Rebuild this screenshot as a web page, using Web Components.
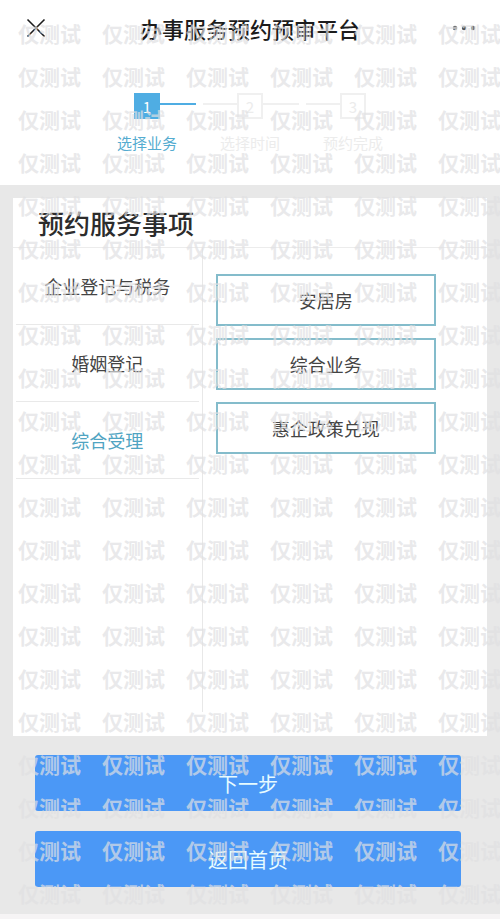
<!DOCTYPE html>
<html lang="zh-CN">
<head>
<meta charset="UTF-8">
<meta name="viewport" content="width=device-width, initial-scale=1">
<title>办事服务预约预审平台</title>
<style>
    body {
        margin: 0;
        font-family: "Noto Sans CJK SC", sans-serif;
        background: #e8e8e8;
    }
</style>
</head>
<body>
<booking-page></booking-page>

<template id="page-template">
    <style>
        :host {
            position: relative;
            display: flex;
            flex-direction: column;
            min-height: 100vh;
            overflow: hidden;
        }

        step-bar {
            padding: 37px 0 30px;
            background: #fff;
        }

        service-card {
            flex: 1;
            margin: 13px 13px 19px;
        }

        .actions {
            display: flex;
            flex-direction: column;
            gap: 20px;
            padding: 0 39px 27px 35px;
        }

        .bottom {
            height: 5px;
            background: #f6f4f5;
        }
    </style>

    <title-bar>办事服务预约预审平台</title-bar>
    <step-bar>
        <step-item number="1" active>选择业务</step-item>
        <step-item number="2">选择时间</step-item>
        <step-item number="3">预约完成</step-item>
    </step-bar>
    <service-card>
        <span slot="heading">预约服务事项</span>
        <category-item slot="category">企业登记与税务</category-item>
        <category-item slot="category">婚姻登记</category-item>
        <category-item slot="category" active>综合受理</category-item>
        <service-option>安居房</service-option>
        <service-option>综合业务</service-option>
        <service-option>惠企政策兑现</service-option>
    </service-card>
    <div class="actions">
        <action-button>下一步</action-button>
        <action-button>返回首页</action-button>
    </div>
    <div class="bottom"></div>
    <water-mark text="仅测试" rows="21" columns="6"></water-mark>
</template>

<template id="title-template">
    <style>
        :host {
            display: grid;
            grid-template-columns: 72px 1fr 72px;
            align-items: center;
            height: 56px;
            background: #fff;
            color: #1c1c1c;
        }

        h1 {
            margin: 0;
            font-size: 22px;
            font-weight: 500;
            line-height: 28px;
            text-align: center;
            white-space: nowrap;
        }

        button {
            display: flex;
            align-items: center;
            justify-content: center;
            height: 56px;
            padding: 0;
            border: 0;
            background: none;
            color: inherit;
        }
    </style>
    <button type="button" aria-label="关闭">
        <svg width="20" height="20" viewBox="0 0 20 20" fill="none" stroke="currentColor" stroke-width="1.6">
            <path d="M1.500 1.500l17 17M18.500 1.500l-17 17"/>
        </svg>
    </button>
    <h1><slot></slot></h1>
    <button type="button" aria-label="更多">
        <svg width="24" height="6" viewBox="0 0 24 6" fill="#555">
            <circle cx="3" cy="3" r="2.200"/>
            <circle cx="12" cy="3" r="2.200"/>
            <circle cx="21" cy="3" r="2.200"/>
        </svg>
    </button>
</template>

<template id="steps-template">
    <style>
        :host {
            display: flex;
            justify-content: center;
        }
    </style>
    <slot></slot>
</template>

<template id="step-template">
    <style>
        :host {
            --tone: #f0f0f0;
            display: block;
            width: 103px;
            color: #ececec;
            font-size: 15px;
            line-height: 24px;
            text-align: center;
        }

        :host([active]) {
            --tone: #4fade3;
            color: #55acd0;
        }

        .marker {
            display: grid;
            grid-template-columns: 1fr 26px 1fr;
            margin-bottom: 12px;
        }

        .marker::before,
        .marker::after {
            content: "";
            height: 2px;
            margin-top: 10px;
            background: var(--tone);
        }

        .marker::before {
            margin-left: 4px;
        }

        .marker::after {
            margin-right: 3px;
        }

        :host(:first-of-type) .marker::before,
        :host(:last-of-type) .marker::after {
            visibility: hidden;
        }

        .number {
            box-sizing: border-box;
            height: 26px;
            border: 2px solid var(--tone);
            line-height: 24px;
        }

        :host([active]) .number {
            background: var(--tone);
            color: #fff;
        }
    </style>
    <div class="marker"><span class="number"></span></div>
    <slot></slot>
</template>

<template id="card-template">
    <style>
        :host {
            display: flex;
            flex-direction: column;
            padding-bottom: 24px;
            box-sizing: border-box;
            background: #fff;
        }

        h2 {
            margin: 0;
            padding: 6px 25px;
            border-bottom: 1px solid #ececec;
            color: #2c2c2c;
            font-size: 26px;
            font-weight: 500;
            line-height: 37px;
        }

        .columns {
            flex: 1;
            display: grid;
            grid-template-columns: 2fr 3fr;
        }

        nav {
            padding: 0 3px;
            border-right: 1px solid #e8e8e8;
        }

        .options {
            display: flex;
            flex-direction: column;
            gap: 12px;
            padding: 26px 51px 0 13px;
        }
    </style>
    <h2><slot name="heading"></slot></h2>
    <div class="columns">
        <nav><slot name="category"></slot></nav>
        <div class="options"><slot></slot></div>
    </div>
</template>

<template id="category-template">
    <style>
        :host {
            display: block;
            border-bottom: 1px solid #e9e9e9;
        }

        a {
            display: block;
            color: #444;
            font-size: 18px;
            line-height: 76px;
            text-align: center;
            text-decoration: none;
            white-space: nowrap;
        }

        :host([active]) a {
            color: #50a4c2;
        }
    </style>
    <a href="#"><slot></slot></a>
</template>

<template id="option-template">
    <style>
        :host {
            display: block;
        }

        button {
            width: 100%;
            height: 52px;
            padding: 0;
            border: 2px solid #84bccb;
            background: #fff;
            color: #444;
            font: inherit;
            font-size: 18px;
        }
    </style>
    <button type="button"><slot></slot></button>
</template>

<template id="action-template">
    <style>
        :host {
            display: block;
        }

        button {
            width: 100%;
            height: 56px;
            padding: 0;
            border: 0;
            border-radius: 3px;
            background: #4b98f6;
            color: #e6fbff;
            font: inherit;
            font-size: 20px;
        }
    </style>
    <button type="button"><slot></slot></button>
</template>

<template id="watermark-template">
    <style>
        /* lies over the whole page and lets clicks through */
        :host {
            position: absolute;
            inset: 0;
            display: grid;
            align-content: start;
            padding: 12px 0 0 18px;
            overflow: hidden;
            pointer-events: none;
            color: rgba(224, 224, 226, 0.7);
            font-size: 21px;
            font-weight: 700;
            line-height: 43px;
            white-space: nowrap;
        }
    </style>
</template>

<script>
class BaseElement extends HTMLElement {
    constructor() {
        super();
        const template = document.getElementById(this.constructor.template);
        this.attachShadow({mode: "open"});
        this.shadowRoot.appendChild(template.content.cloneNode(true));
    }
}

class TitleBar extends BaseElement {
    static template = "title-template";
}

class StepBar extends BaseElement {
    static template = "steps-template";
}

class StepItem extends BaseElement {
    static template = "step-template";

    connectedCallback() {
        this.shadowRoot.querySelector(".number").textContent = this.getAttribute("number") ?? "";
    }
}

class ServiceCard extends BaseElement {
    static template = "card-template";
}

class CategoryItem extends BaseElement {
    static template = "category-template";
}

class ServiceOption extends BaseElement {
    static template = "option-template";
}

class ActionButton extends BaseElement {
    static template = "action-template";
}

class WaterMark extends BaseElement {
    static template = "watermark-template";

    connectedCallback() {
        const rows = Number(this.getAttribute("rows") ?? 1);
        const columns = Number(this.getAttribute("columns") ?? 1);
        this.style.gridTemplateColumns = `repeat(${columns}, 84px)`;

        for (let i = 0; i < rows * columns; i++) {
            const mark = document.createElement("span");
            mark.textContent = this.getAttribute("text");
            this.shadowRoot.appendChild(mark);
        }
    }
}

class BookingPage extends BaseElement {
    static template = "page-template";
}

customElements.define("title-bar", TitleBar);
customElements.define("step-bar", StepBar);
customElements.define("step-item", StepItem);
customElements.define("service-card", ServiceCard);
customElements.define("category-item", CategoryItem);
customElements.define("service-option", ServiceOption);
customElements.define("action-button", ActionButton);
customElements.define("water-mark", WaterMark);
customElements.define("booking-page", BookingPage);
</script>
</body>
</html>
